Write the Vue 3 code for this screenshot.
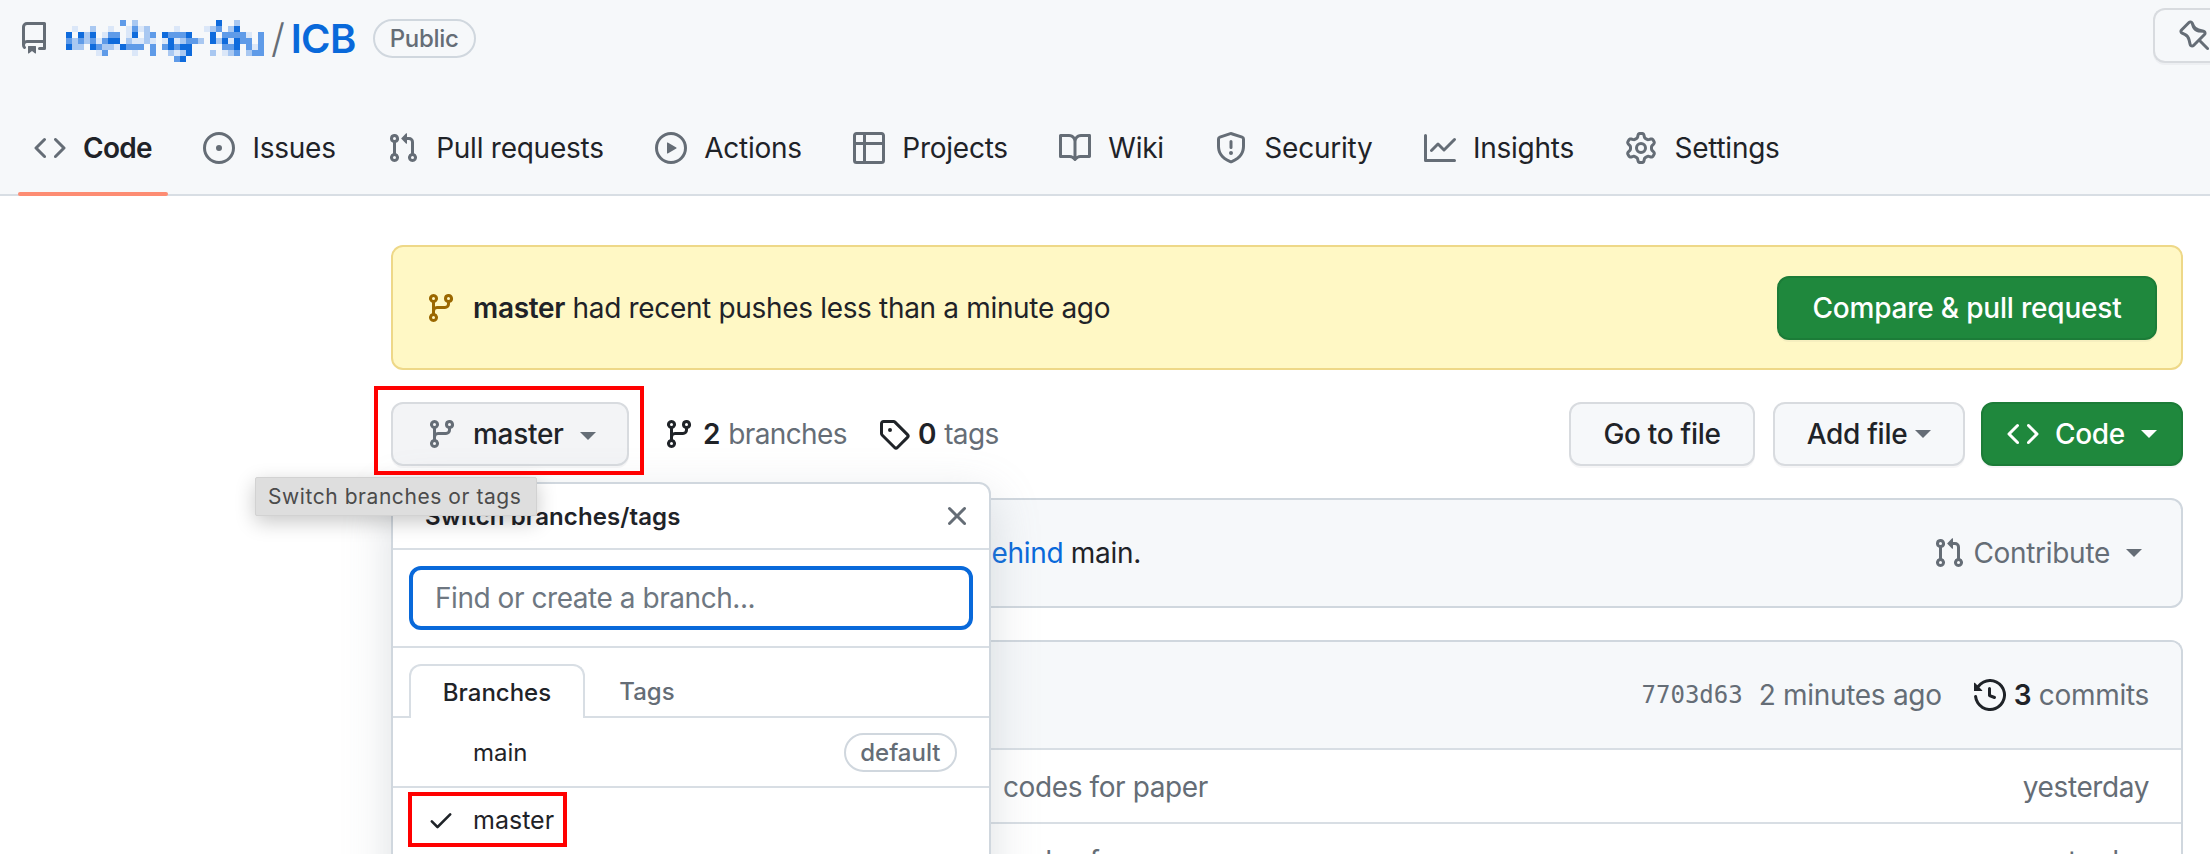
<script setup>
const p = {
  repo: 'M2 2.5A2.5 2.5 0 0 1 4.5 0h8.75a.75.75 0 0 1 .75.75v12.5a.75.75 0 0 1-.75.75h-2.5a.75.75 0 0 1 0-1.5h1.75v-2h-8a1 1 0 0 0-.714 1.7.75.75 0 1 1-1.072 1.05A2.495 2.495 0 0 1 2 11.5Zm10.5-1h-8a1 1 0 0 0-1 1v6.708A2.486 2.486 0 0 1 4.5 9h8ZM5 12.25a.25.25 0 0 1 .25-.25h3.5a.25.25 0 0 1 .25.25v3.25a.25.25 0 0 1-.4.2l-1.45-1.087a.249.249 0 0 0-.3 0L5.4 15.7a.25.25 0 0 1-.4-.2Z',
  code: 'm11.28 3.22 4.25 4.25a.75.75 0 0 1 0 1.06l-4.25 4.25a.749.749 0 0 1-1.275-.326.749.749 0 0 1 .215-.734L13.94 8l-3.72-3.72a.749.749 0 0 1 .326-1.275.749.749 0 0 1 .734.215Zm-6.56 0a.751.751 0 0 1 1.042.018.751.751 0 0 1 .018 1.042L2.06 8l3.72 3.72a.749.749 0 0 1-.326 1.275.749.749 0 0 1-.734-.215L.47 8.53a.75.75 0 0 1 0-1.06Z',
  issue: 'M8 9.5a1.5 1.5 0 1 0 0-3 1.5 1.5 0 0 0 0 3ZM8 0a8 8 0 1 1 0 16A8 8 0 0 1 8 0ZM1.5 8a6.5 6.5 0 1 0 13 0 6.5 6.5 0 0 0-13 0Z',
  pr: 'M1.5 3.25a2.25 2.25 0 1 1 3 2.122v5.256a2.251 2.251 0 1 1-1.5 0V5.372A2.25 2.25 0 0 1 1.5 3.25Zm5.677-.177L9.573.677A.25.25 0 0 1 10 .854V2.5h1A2.5 2.5 0 0 1 13.5 5v5.628a2.251 2.251 0 1 1-1.5 0V5a1 1 0 0 0-1-1h-1v1.646a.25.25 0 0 1-.427.177L7.177 3.427a.25.25 0 0 1 0-.354ZM3.75 2.5a.75.75 0 1 0 0 1.5.75.75 0 0 0 0-1.5Zm0 9.5a.75.75 0 1 0 0 1.5.75.75 0 0 0 0-1.5Zm8.25.75a.75.75 0 1 0 1.5 0 .75.75 0 0 0-1.5 0Z',
  play: 'M8 0a8 8 0 1 1 0 16A8 8 0 0 1 8 0ZM1.5 8a6.5 6.5 0 1 0 13 0 6.5 6.5 0 0 0-13 0Zm4.879-2.773 4.264 2.559a.25.25 0 0 1 0 .428l-4.264 2.559A.25.25 0 0 1 6 10.559V5.442a.25.25 0 0 1 .379-.215Z',
  table: 'M0 1.75C0 .784.784 0 1.75 0h12.5C15.216 0 16 .784 16 1.75v12.5A1.75 1.75 0 0 1 14.25 16H1.75A1.75 1.75 0 0 1 0 14.25ZM6.5 6.5v8h7.75a.25.25 0 0 0 .25-.25V6.5Zm8-1.5V1.75a.25.25 0 0 0-.25-.25H6.5V5Zm-13 1.5v7.75c0 .138.112.25.25.25H5v-8ZM5 5V1.5H1.75a.25.25 0 0 0-.25.25V5Z',
  book: 'M0 1.75A.75.75 0 0 1 .75 1h4.253c1.227 0 2.317.59 3 1.501A3.743 3.743 0 0 1 11.006 1h4.245a.75.75 0 0 1 .75.75v10.5a.75.75 0 0 1-.75.75h-4.507a2.25 2.25 0 0 0-1.591.659l-.622.621a.75.75 0 0 1-1.06 0l-.622-.621A2.25 2.25 0 0 0 5.258 13H.75a.75.75 0 0 1-.75-.75Zm7.251 10.324.004-5.073-.002-2.253A2.25 2.25 0 0 0 5.003 2.5H1.5v9h3.757a3.75 3.75 0 0 1 1.994.574ZM8.755 4.75l-.004 7.322a3.752 3.752 0 0 1 1.992-.572H14.5v-9h-3.495a2.25 2.25 0 0 0-2.25 2.25Z',
  shield: 'M7.467.133a1.748 1.748 0 0 1 1.066 0l5.25 1.68A1.75 1.75 0 0 1 15 3.48V7c0 1.566-.32 3.182-1.303 4.682-.983 1.498-2.585 2.813-5.032 3.855a1.697 1.697 0 0 1-1.33 0c-2.447-1.042-4.049-2.357-5.032-3.855C1.32 10.182 1 8.566 1 7V3.48a1.75 1.75 0 0 1 1.217-1.667Zm.61 1.429a.25.25 0 0 0-.153 0l-5.25 1.68a.25.25 0 0 0-.174.238V7c0 1.358.275 2.666 1.057 3.86.784 1.194 2.121 2.34 4.366 3.297a.196.196 0 0 0 .154 0c2.245-.956 3.582-2.104 4.366-3.298C13.225 9.666 13.5 8.36 13.5 7V3.48a.251.251 0 0 0-.174-.237l-5.25-1.68ZM8.75 4.75v3a.75.75 0 0 1-1.5 0v-3a.75.75 0 0 1 1.5 0ZM9 10.5a1 1 0 1 1-2 0 1 1 0 0 1 2 0Z',
  graph: 'M1.5 1.75V13.5h13.75a.75.75 0 0 1 0 1.5H.75a.75.75 0 0 1-.75-.75V1.75a.75.75 0 0 1 1.5 0Zm14.28 2.53-5.25 5.25a.75.75 0 0 1-1.06 0L7 7.06 4.28 9.78a.751.751 0 0 1-1.042-.018.751.751 0 0 1-.018-1.042l3.25-3.25a.75.75 0 0 1 1.06 0L10 7.94l4.72-4.72a.751.751 0 0 1 1.042.018.751.751 0 0 1 .018 1.042Z',
  gear: 'M8 0a8.2 8.2 0 0 1 .701.031C9.444.095 9.99.645 10.16 1.29l.288 1.107c.018.066.079.158.212.224.231.114.454.243.668.386.123.082.233.09.299.071l1.103-.303c.644-.176 1.392.021 1.82.63.27.385.506.792.704 1.218.315.675.111 1.422-.364 1.891l-.814.806c-.049.048-.098.147-.088.294.016.257.016.515 0 .772-.01.147.038.246.088.294l.814.806c.475.469.679 1.216.364 1.891a7.977 7.977 0 0 1-.704 1.217c-.428.61-1.176.807-1.82.63l-1.102-.302c-.067-.019-.177-.011-.3.071a5.909 5.909 0 0 1-.668.386c-.133.066-.194.158-.211.224l-.29 1.106c-.168.646-.715 1.196-1.458 1.26a8.006 8.006 0 0 1-1.402 0c-.743-.064-1.289-.614-1.458-1.26l-.289-1.106c-.018-.066-.079-.158-.212-.224a5.738 5.738 0 0 1-.668-.386c-.123-.082-.233-.09-.299-.071l-1.103.303c-.644.176-1.392-.021-1.82-.63a8.12 8.12 0 0 1-.704-1.218c-.315-.675-.111-1.422.363-1.891l.815-.806c.05-.048.098-.147.088-.294a6.214 6.214 0 0 1 0-.772c.01-.147-.038-.246-.088-.294l-.815-.806C.635 6.045.431 5.298.746 4.623a7.92 7.92 0 0 1 .704-1.217c.428-.61 1.176-.807 1.82-.63l1.102.302c.067.019.177.011.3-.071.214-.143.437-.272.668-.386.133-.066.194-.158.211-.224l.29-1.106C6.009.645 6.556.095 7.299.03 7.53.01 7.764 0 8 0Zm-.571 1.525c-.036.003-.108.036-.137.146l-.289 1.105c-.147.561-.549.967-.998 1.189-.173.086-.34.183-.5.29-.417.278-.97.423-1.529.27l-1.103-.303c-.109-.03-.175.016-.195.045-.22.312-.412.644-.573.99-.014.031-.021.11.059.19l.815.806c.411.406.562.957.53 1.456a4.709 4.709 0 0 0 0 .582c.032.499-.119 1.05-.53 1.456l-.815.806c-.081.08-.073.159-.059.19.162.346.353.677.573.989.02.03.085.076.195.046l1.102-.303c.56-.153 1.113-.008 1.53.27.161.107.328.204.501.29.447.222.85.629.997 1.189l.289 1.105c.029.109.101.143.137.146a6.6 6.6 0 0 0 1.142 0c.036-.003.108-.036.137-.146l.289-1.105c.147-.561.549-.967.998-1.189.173-.086.34-.183.5-.29.417-.278.97-.423 1.529-.27l1.103.303c.109.029.175-.016.195-.045.22-.313.411-.644.573-.99.014-.031.021-.11-.059-.19l-.815-.806c-.411-.406-.562-.957-.53-1.456a4.709 4.709 0 0 0 0-.582c-.032-.499.119-1.05.53-1.456l.815-.806c.081-.08.073-.159.059-.19a6.464 6.464 0 0 0-.573-.989c-.02-.03-.085-.076-.195-.046l-1.102.303c-.56.153-1.113.008-1.53-.27a4.44 4.44 0 0 0-.501-.29c-.447-.222-.85-.629-.997-1.189l-.289-1.105c-.029-.11-.101-.143-.137-.146a6.6 6.6 0 0 0-1.142 0ZM11 8a3 3 0 1 1-6 0 3 3 0 0 1 6 0ZM9.5 8a1.5 1.5 0 1 0-3.001.001A1.5 1.5 0 0 0 9.5 8Z',
  branch: 'M9.5 3.25a2.25 2.25 0 1 1 3 2.122V6A2.5 2.5 0 0 1 10 8.5H6a1 1 0 0 0-1 1v1.128a2.251 2.251 0 1 1-1.5 0V5.372a2.25 2.25 0 1 1 1.5 0v1.836A2.493 2.493 0 0 1 6 7h4a1 1 0 0 0 1-1v-.628A2.25 2.25 0 0 1 9.5 3.25Zm-6 0a.75.75 0 1 0 1.5 0 .75.75 0 0 0-1.5 0Zm8.25-.75a.75.75 0 1 0 0 1.5.75.75 0 0 0 0-1.5ZM4.25 12a.75.75 0 1 0 0 1.5.75.75 0 0 0 0-1.5Z',
  tag: 'M1 7.775V2.75C1 1.784 1.784 1 2.75 1h5.025c.464 0 .91.184 1.238.513l6.25 6.25a1.75 1.75 0 0 1 0 2.474l-5.026 5.026a1.75 1.75 0 0 1-2.474 0l-6.25-6.25A1.752 1.752 0 0 1 1 7.775Zm1.5 0c0 .066.026.13.073.177l6.25 6.25a.25.25 0 0 0 .354 0l5.025-5.025a.25.25 0 0 0 0-.354l-6.25-6.25a.25.25 0 0 0-.177-.073H2.75a.25.25 0 0 0-.25.25ZM6 5a1 1 0 1 1 0 2 1 1 0 0 1 0-2Z',
  history: 'm.427 1.927 1.215 1.215a8.002 8.002 0 1 1-1.6 5.685.75.75 0 1 1 1.493-.154 6.5 6.5 0 1 0 1.18-4.458l1.358 1.358A.25.25 0 0 1 3.896 6H.25A.25.25 0 0 1 0 5.75V2.104a.25.25 0 0 1 .427-.177ZM7.75 4a.75.75 0 0 1 .75.75v2.992l2.028.812a.75.75 0 0 1-.557 1.392l-2.5-1A.751.751 0 0 1 7 8.25v-3.5A.75.75 0 0 1 7.75 4Z',
  x: 'M3.72 3.72a.75.75 0 0 1 1.06 0L8 6.94l3.22-3.22a.749.749 0 0 1 1.275.326.749.749 0 0 1-.215.734L9.06 8l3.22 3.22a.749.749 0 0 1-.326 1.275.749.749 0 0 1-.734-.215L8 9.06l-3.22 3.22a.751.751 0 0 1-1.042-.018.751.751 0 0 1-.018-1.042L6.94 8 3.72 4.78a.75.75 0 0 1 0-1.06Z',
  check: 'M13.78 4.22a.75.75 0 0 1 0 1.06l-7.25 7.25a.75.75 0 0 1-1.06 0L2.22 9.28a.751.751 0 0 1 .018-1.042.751.751 0 0 1 1.042-.018L6 10.94l6.72-6.72a.75.75 0 0 1 1.06 0Z',
  pin: 'M4.456.734a1.75 1.75 0 0 1 2.826.504l.613 1.327a3.081 3.081 0 0 0 2.084 1.707l2.454.584c1.332.317 1.8 1.972.832 2.94L11.06 10l3.72 3.72a.749.749 0 0 1-.326 1.275.749.749 0 0 1-.734-.215L10 11.06l-2.204 2.205c-.968.968-2.623.5-2.94-.832l-.584-2.454a3.081 3.081 0 0 0-1.707-2.084l-1.327-.613a1.75 1.75 0 0 1-.504-2.826L4.456.734ZM5.92 1.866a.25.25 0 0 0-.404-.072L1.794 5.516a.25.25 0 0 0 .072.404l1.328.613A4.582 4.582 0 0 1 5.73 9.63l.584 2.454a.25.25 0 0 0 .42.12l5.47-5.47a.25.25 0 0 0-.12-.42L9.63 6.23a4.581 4.581 0 0 1-3.098-2.537L5.92 1.866Z'
}

const tabs = [
  { icon: 'code', label: 'Code', active: true },
  { icon: 'issue', label: 'Issues' },
  { icon: 'pr', label: 'Pull requests' },
  { icon: 'play', label: 'Actions' },
  { icon: 'table', label: 'Projects' },
  { icon: 'book', label: 'Wiki' },
  { icon: 'shield', label: 'Security' },
  { icon: 'graph', label: 'Insights' },
  { icon: 'gear', label: 'Settings' }
]

// Pixelated (censored) owner name: one string per row of 6px cells
const rows = [
  '.........M.L.P...........D..L....',
  '.p..L..p..pMpL....p....pLM.LD....',
  'D.DLD.pMM.pD.LM.DMMMD...D.MMMMp.M',
  'MLMLMpMDD.LppLp.pDpLMML.DLDpDMM.M',
  'DLL.DMLLpDMMM.M.MDMDD.....MMD.MpM',
  '.....pM....p..M..LpLD...L.pLM.LMM',
  '..................MD.............'
]
const shades = { D: '#0f6bdc', M: '#5f9be8', L: '#a9c8f1', p: '#dbe7f8' }
const cells = rows.flatMap((r, y) =>
  [...r].flatMap((c, x) => (shades[c] ? [{ x: x * 6, y: y * 6, fill: shades[c] }] : []))
)
</script>

<template>
  <div class="page">
    <header class="head">
      <div class="repo-row">
        <svg class="ico repo-ico" viewBox="0 0 16 16"><path :d="p.repo" /></svg>
        <svg class="mosaic" width="198" height="42" viewBox="0 0 198 42" shape-rendering="crispEdges">
          <rect v-for="(c, i) in cells" :key="i" :x="c.x" :y="c.y" width="6" height="6" :fill="c.fill" />
        </svg>
        <span class="slash">/</span>
        <span class="repo-name">ICB</span>
        <span class="pill">Public</span>
        <button class="pin-btn"><svg class="ico" viewBox="0 0 16 16"><path :d="p.pin" /></svg></button>
      </div>
      <nav class="tabs">
        <a v-for="t in tabs" :key="t.label" class="tab" :class="{ on: t.active }">
          <svg class="ico" viewBox="0 0 16 16"><path :d="p[t.icon]" /></svg>
          <span>{{ t.label }}</span>
        </a>
      </nav>
    </header>

    <main class="main">
      <section class="banner">
        <svg class="ico amber" viewBox="0 0 16 16"><path :d="p.branch" /></svg>
        <span class="banner-text"><b>master</b> had recent pushes less than a minute ago</span>
        <button class="btn green compare">Compare &amp; pull request</button>
      </section>

      <section class="toolbar">
        <button class="btn branch-btn">
          <svg class="ico" viewBox="0 0 16 16"><path :d="p.branch" /></svg>
          <span>master</span>
          <i class="caret"></i>
        </button>
        <a class="stat first"><svg class="ico dark" viewBox="0 0 16 16"><path :d="p.branch" /></svg><b>2</b><span>branches</span></a>
        <a class="stat"><svg class="ico dark" viewBox="0 0 16 16"><path :d="p.tag" /></svg><b>0</b><span>tags</span></a>
        <button class="btn goto">Go to file</button>
        <button class="btn addfile">Add file<i class="caret"></i></button>
        <button class="btn green codebtn">
          <svg class="ico white" viewBox="0 0 16 16"><path :d="p.code" /></svg>
          <span>Code</span>
          <i class="caret white-caret"></i>
        </button>
      </section>

      <section class="ahead">
        <span>This branch is 3 commits ahead, 1 commit <a class="link">behind</a> main.</span>
        <span class="contribute">
          <svg class="ico" viewBox="0 0 16 16"><path :d="p.pr" /></svg>
          <span>Contribute</span>
          <i class="caret"></i>
        </span>
      </section>

      <section class="files">
        <div class="files-head">
          <code class="sha">7703d63</code>
          <span class="when">2 minutes ago</span>
          <svg class="ico dark hist" viewBox="0 0 16 16"><path :d="p.history" /></svg>
          <span class="commits"><b>3</b> commits</span>
        </div>
        <div class="file-row"><span>codes for paper</span><span>yesterday</span></div>
        <div class="file-row"><span>codes for paper</span><span>yesterday</span></div>
      </section>
    </main>

    <aside class="popover">
      <div class="pop-head">
        <b>Switch branches/tags</b>
        <svg class="ico" viewBox="0 0 16 16"><path :d="p.x" /></svg>
      </div>
      <div class="pop-search"><div class="fake-input">Find or create a branch...</div></div>
      <div class="pop-tabs">
        <span class="pop-tab active">Branches</span>
        <span class="pop-tab">Tags</span>
      </div>
      <div class="pop-item">
        <span>main</span>
        <span class="default-pill">default</span>
      </div>
      <div class="pop-item sel">
        <svg class="ico dark check" viewBox="0 0 16 16"><path :d="p.check" /></svg>
        <span>master</span>
      </div>
    </aside>

    <div class="tooltip">Switch branches or tags</div>
    <div class="mark mark-a"></div>
    <div class="mark mark-b"></div>
  </div>
</template>

<style>
html, body { margin: 0; background: #fff; }
</style>

<style scoped>
.page {
  position: relative;
  width: 2210px;
  height: 854px;
  overflow: hidden;
  background: #fff;
  color: #1f2328;
  font-family: Inter, "Liberation Sans", sans-serif;
  font-size: 28px;
  letter-spacing: -0.3px;
}
.ico { width: 32px; height: 32px; flex: none; fill: #656d76; display: block; }
.ico.amber { fill: #9a6700; }
.ico.dark { fill: #1f2328; }
.ico.white { fill: #fff; }
.head {
  box-sizing: border-box;
  height: 196px;
  background: #f6f8fa;
  border-bottom: 2px solid #d8dee4;
}
.repo-row { display: flex; align-items: center; height: 76px; }
.repo-ico { margin-left: 18px; }
.mosaic { margin: 6px 0 0 16px; flex: none; }
.slash { margin-left: 7px; font-size: 40px; color: #656d76; font-weight: 300; }
.repo-name { margin-left: 6px; font-size: 40px; font-weight: 600; color: #0969da; letter-spacing: -0.6px; }
.pill {
  margin-left: 17px;
  box-sizing: border-box;
  height: 39px;
  padding: 0 15px;
  display: flex;
  align-items: center;
  border: 2px solid #d0d7de;
  border-radius: 20px;
  font-size: 24px;
  font-weight: 500;
  color: #656d76;
}
.pin-btn {
  margin: 0 0 5px auto;
  box-sizing: border-box;
  width: 57px;
  height: 55px;
  padding: 0 0 0 24px;
  background: #f6f8fa;
  border: 2px solid #d8dbdf;
  border-right: 0;
  border-radius: 12px 0 0 12px;
  box-shadow: 0 2px 0 rgba(31, 35, 40, .04);
  flex: none;
}
.tabs { display: flex; gap: 19.5px; margin: 24px 0 0 18px; letter-spacing: -0.25px; }
.tab {
  position: relative;
  box-sizing: border-box;
  height: 96px;
  padding: 0 16px;
  display: flex;
  align-items: center;
  gap: 17px;
}
.tab.on { font-weight: 600; letter-spacing: -0.7px; }
.tab.on::after {
  content: "";
  position: absolute;
  left: 0; right: 0; bottom: 0;
  height: 4px;
  background: #fd8c73;
  border-radius: 2px;
}
.main { padding: 49px 27px 0 391px; }
.banner {
  box-sizing: border-box;
  height: 125px;
  padding: 0 24px 0 32px;
  display: flex;
  align-items: center;
  background: #fff8c5;
  border: 2px solid #eed888;
  border-radius: 12px;
}
.banner-text { margin-left: 16px; letter-spacing: -0.33px; }
.banner-text b, .stat b, .commits b, .pop-head b { font-weight: 600; }
.btn {
  box-sizing: border-box;
  height: 64px;
  display: flex;
  align-items: center;
  justify-content: center;
  flex: none;
  font: inherit;
  font-weight: 500;
  letter-spacing: inherit;
  color: #1f2328;
  background: #f6f8fa;
  border: 2px solid #d8dbdf;
  border-radius: 12px;
  box-shadow: 0 2px 0 rgba(31, 35, 40, .04);
  padding: 0;
}
.btn.green { background: #1f883d; color: #fff; border-color: #1c7c38; }
.compare { width: 380px; margin-left: auto; letter-spacing: -0.2px; }
.toolbar { display: flex; align-items: center; height: 64px; margin-top: 32px; }
.branch-btn { width: 238px; background: #f3f4f6; justify-content: flex-start; padding-left: 33px; }
.branch-btn span { margin-left: 15px; }
.caret {
  display: block;
  width: 0; height: 0;
  border-style: solid;
  border-width: 8px 8px 0;
  border-color: #656d76 transparent transparent;
  flex: none;
}
.branch-btn .caret { margin: 4px 0 0 16px; }
.white-caret { border-top-color: #fff; }
.stat { display: flex; align-items: center; color: #656d76; margin-left: 31px; }
.stat.first { margin-left: 34px; }
.stat b { color: #1f2328; margin: 0 8px; }
.stat span { letter-spacing: -0.6px; }
.goto { width: 186px; margin-left: auto; }
.addfile { width: 192px; margin-left: 18px; gap: 8px; }
.codebtn { width: 202px; margin-left: 16px; }
.codebtn span { margin: 0 16px; }
.ahead {
  box-sizing: border-box;
  height: 110px;
  margin-top: 32px;
  padding: 0 39px 0 32px;
  display: flex;
  align-items: center;
  justify-content: space-between;
  background: #f6f8fa;
  border: 2px solid #d0d7de;
  border-radius: 12px;
}
.link { color: #0969da; }
.contribute { display: flex; align-items: center; gap: 8px; color: #656d76; }
.contribute .caret { margin-left: 8px; }
.files {
  margin-top: 32px;
  border: 2px solid #d0d7de;
  border-bottom: 0;
  border-radius: 12px 12px 0 0;
}
.files-head {
  box-sizing: border-box;
  height: 106px;
  padding: 0 32px;
  display: flex;
  align-items: center;
  justify-content: flex-end;
  background: #f6f8fa;
  border-radius: 10px 10px 0 0;
  color: #656d76;
}
.sha { font-family: "DejaVu Sans Mono", monospace; font-size: 24px; letter-spacing: 0; }
.when { margin-left: 16px; }
.hist { margin-left: 32px; }
.commits { margin-left: 8px; }
.commits b { color: #1f2328; }
.file-row {
  box-sizing: border-box;
  height: 74px;
  padding: 2px 32px 0 610px;
  display: flex;
  align-items: center;
  justify-content: space-between;
  border-top: 2px solid #d8dee4;
  color: #656d76;
  letter-spacing: -0.4px;
}
.popover {
  position: absolute;
  left: 391px;
  top: 482px;
  box-sizing: border-box;
  width: 600px;
  height: 420px;
  background: #fff;
  border: 2px solid #d0d7de;
  border-radius: 12px;
  box-shadow: 0 16px 48px rgba(140, 149, 159, .3);
  font-size: 24px;
  letter-spacing: 0;
}
.pop-head {
  box-sizing: border-box;
  height: 66px;
  padding: 0 16px 0 32px;
  display: flex;
  align-items: center;
  justify-content: space-between;
  border-bottom: 2px solid #d8dee4;
  letter-spacing: 0.1px;
}
.pop-search {
  box-sizing: border-box;
  height: 98px;
  padding: 16px;
  border-bottom: 2px solid #d8dee4;
}
.fake-input {
  box-sizing: border-box;
  height: 64px;
  padding-left: 22px;
  display: flex;
  align-items: center;
  border: 4px solid #0969da;
  border-radius: 12px;
  font-size: 28px;
  letter-spacing: -0.45px;
  color: #6e7781;
}
.pop-tabs {
  display: flex;
  height: 70px;
  box-sizing: border-box;
  padding: 16px 16px 0;
  border-bottom: 2px solid #d8dee4;
}
.pop-tab {
  box-sizing: border-box;
  width: 176px;
  height: 54px;
  display: flex;
  align-items: center;
  justify-content: center;
  color: #656d76;
  font-weight: 500;
}
.pop-tab + .pop-tab { width: 124px; }
.pop-tab.active {
  color: #1f2328;
  background: #fff;
  border: 2px solid #d8dee4;
  border-bottom: 0;
  border-radius: 12px 12px 0 0;
  margin-bottom: -2px;
}
.pop-item {
  box-sizing: border-box;
  height: 70px;
  padding: 0 32px 0 80px;
  display: flex;
  align-items: center;
  justify-content: space-between;
  border-bottom: 2px solid #d8dee4;
  font-size: 24px;
}
.pop-item.sel { height: 64px; justify-content: flex-start; padding-left: 32px; gap: 18px; border-bottom: 0; font-size: 25px; }
.check { margin-left: 2px; width: 28px; height: 28px; }
.default-pill {
  box-sizing: border-box;
  height: 39px;
  padding: 0 14.5px;
  display: flex;
  align-items: center;
  border: 2px solid #d0d7de;
  border-radius: 20px;
  font-size: 24px;
  font-weight: 500;
  color: #656d76;
}
.tooltip {
  position: absolute;
  left: 255px;
  top: 477px;
  box-sizing: border-box;
  width: 282px;
  height: 39px;
  padding-left: 12px;
  display: flex;
  align-items: center;
  background: #dedede;
  border: 1px solid #d2d2d2;
  border-radius: 2px;
  box-shadow: 0 6px 20px rgba(0, 0, 0, .22);
  color: #4b4b4b;
  font-size: 21px;
  letter-spacing: 0.56px;
}
.mark { position: absolute; box-sizing: border-box; border: 4px solid #f00; }
.mark-a { left: 374px; top: 386px; width: 270px; height: 89px; }
.mark-b { left: 408px; top: 792px; width: 159px; height: 55px; }
</style>
